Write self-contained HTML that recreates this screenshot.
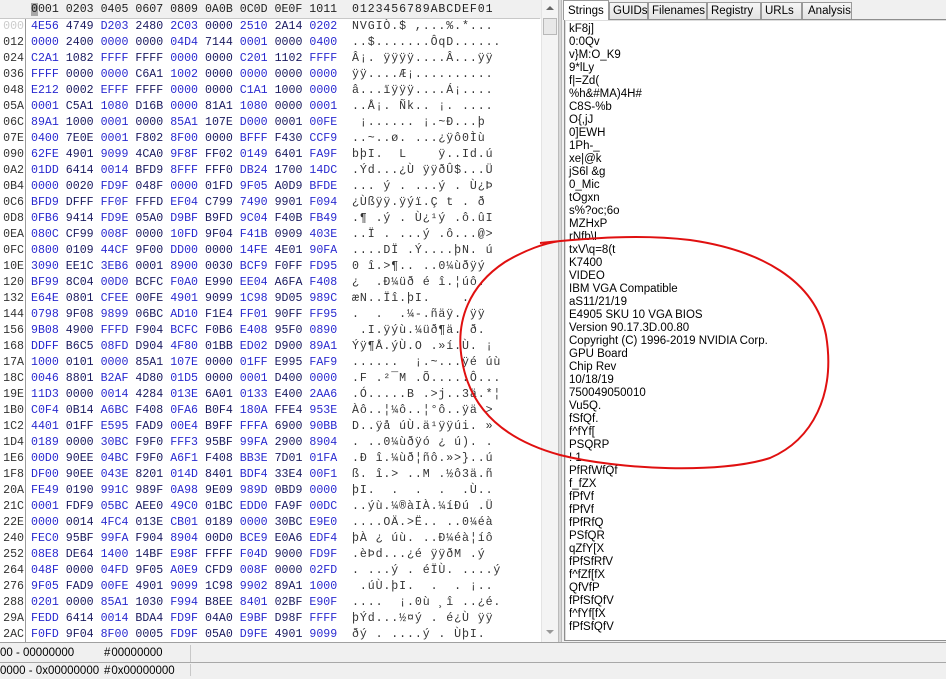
<!DOCTYPE html>
<html><head><meta charset="utf-8"><style>
*{margin:0;padding:0;box-sizing:border-box}
body{width:946px;height:676px;overflow:hidden;background:#f0f0f0;position:relative;font-family:"Liberation Sans",sans-serif}
.hexhead{position:absolute;left:0;top:0;width:540px;height:19px;background:#f0f0f0;border-bottom:1px solid #c8c8c8;font:11.6px/19px "Liberation Mono",monospace;color:#222;white-space:pre}
.hexarea{position:absolute;left:0;top:19px;width:541px;height:623px;background:#fff;overflow:hidden}
.offcol{position:absolute;left:0;top:0;width:26px;height:623px;background:#fff;border-right:1px solid #9a9a9a}
.row{position:absolute;left:0;height:16px;font:11.6px/16px "Liberation Mono",monospace;white-space:pre}
.off{position:absolute;left:0;width:26px;text-align:right;padding-right:2px;color:#333}
.hx{position:absolute;left:31px;color:#1a1a60}
.b{color:#2a2ad0}
.as{position:absolute;left:352px;color:#333;letter-spacing:0.9px}
.sb{position:absolute;left:541px;top:0;width:17px;height:642px;background:#f4f4f4;border-left:1px solid #e4e4e4}
.thumb{position:absolute;left:1px;top:18px;width:14px;height:17px;background:#e8e8e8;border:1px solid #b8b8b8}
.div{position:absolute;left:558px;top:0;width:4px;height:642px;background:#d8d8d8;border-left:1px solid #bbb;border-right:1px solid #bbb}
.tab{position:absolute;top:2px;height:17px;border:1px solid #9a9a9a;border-bottom:none;background:linear-gradient(#f6f6f6,#e2e2e2);font-size:11.5px;line-height:16px;padding:0 3px;color:#000}
.list{position:absolute;left:564px;top:19px;width:382px;height:622px;background:#fff;border:1px solid #8e8e8e;border-right:none;box-shadow:inset 1px 1px 0 #ddd}
.li{position:absolute;left:4px;font-size:11.5px;line-height:13px;color:#000;white-space:pre}
.status{position:absolute;left:0;width:946px;font-size:11.5px;color:#000}
</style></head><body>
<div class="hexhead"><span style="position:absolute;left:31px"><span style="background:#a8a8a8">0</span>001 0203 0405 0607 0809 0A0B 0C0D 0E0F 1011</span><span style="position:absolute;left:352px;letter-spacing:0.9px">0123456789ABCDEF01</span></div>
<div class="hexarea">
<div class="offcol"></div>
<div class="row" style="top:0px"><span class="off" style="color:#ccc">000</span><span class="hx"><span class="b">4E56</span> 4749 <span class="b">D203</span> 2480 <span class="b">2C03</span> 0000 <span class="b">2510</span> 2A14 <span class="b">0202</span></span><span class="as">NVGIÒ.$ ,...%.*...</span></div>
<div class="row" style="top:16px"><span class="off">012</span><span class="hx"><span class="b">0000</span> 2400 <span class="b">0000</span> 0000 <span class="b">04D4</span> 7144 <span class="b">0001</span> 0000 <span class="b">0400</span></span><span class="as">..$.......ÔqD......</span></div>
<div class="row" style="top:32px"><span class="off">024</span><span class="hx"><span class="b">C2A1</span> 1082 <span class="b">FFFF</span> FFFF <span class="b">0000</span> 0000 <span class="b">C201</span> 1102 <span class="b">FFFF</span></span><span class="as">Â¡. ÿÿÿÿ....Â...ÿÿ</span></div>
<div class="row" style="top:48px"><span class="off">036</span><span class="hx"><span class="b">FFFF</span> 0000 <span class="b">0000</span> C6A1 <span class="b">1002</span> 0000 <span class="b">0000</span> 0000 <span class="b">0000</span></span><span class="as">ÿÿ....Æ¡..........</span></div>
<div class="row" style="top:64px"><span class="off">048</span><span class="hx"><span class="b">E212</span> 0002 <span class="b">EFFF</span> FFFF <span class="b">0000</span> 0000 <span class="b">C1A1</span> 1000 <span class="b">0000</span></span><span class="as">â...ïÿÿÿ....Á¡....</span></div>
<div class="row" style="top:80px"><span class="off">05A</span><span class="hx"><span class="b">0001</span> C5A1 <span class="b">1080</span> D16B <span class="b">0000</span> 81A1 <span class="b">1080</span> 0000 <span class="b">0001</span></span><span class="as">..Å¡. Ñk.. ¡. ....</span></div>
<div class="row" style="top:96px"><span class="off">06C</span><span class="hx"><span class="b">89A1</span> 1000 <span class="b">0001</span> 0000 <span class="b">85A1</span> 107E <span class="b">D000</span> 0001 <span class="b">00FE</span></span><span class="as"> ¡...... ¡.~Ð...þ</span></div>
<div class="row" style="top:112px"><span class="off">07E</span><span class="hx"><span class="b">0400</span> 7E0E <span class="b">0001</span> F802 <span class="b">8F00</span> 0000 <span class="b">BFFF</span> F430 <span class="b">CCF9</span></span><span class="as">..~..ø. ...¿ÿô0Ìù</span></div>
<div class="row" style="top:128px"><span class="off">090</span><span class="hx"><span class="b">62FE</span> 4901 <span class="b">9099</span> 4CA0 <span class="b">9F8F</span> FF02 <span class="b">0149</span> 6401 <span class="b">FA9F</span></span><span class="as">bþI.  L    ÿ..Id.ú</span></div>
<div class="row" style="top:144px"><span class="off">0A2</span><span class="hx"><span class="b">01DD</span> 6414 <span class="b">0014</span> BFD9 <span class="b">8FFF</span> FFF0 <span class="b">DB24</span> 1700 <span class="b">14DC</span></span><span class="as">.Ýd...¿Ù ÿÿðÛ$...Ü</span></div>
<div class="row" style="top:160px"><span class="off">0B4</span><span class="hx"><span class="b">0000</span> 0020 <span class="b">FD9F</span> 048F <span class="b">0000</span> 01FD <span class="b">9F05</span> A0D9 <span class="b">BFDE</span></span><span class="as">... ý . ...ý . Ù¿Þ</span></div>
<div class="row" style="top:176px"><span class="off">0C6</span><span class="hx"><span class="b">BFD9</span> DFFF <span class="b">FF0F</span> FFFD <span class="b">EF04</span> C799 <span class="b">7490</span> 9901 <span class="b">F094</span></span><span class="as">¿Ùßÿÿ.ÿýï.Ç t . ð</span></div>
<div class="row" style="top:192px"><span class="off">0D8</span><span class="hx"><span class="b">0FB6</span> 9414 <span class="b">FD9E</span> 05A0 <span class="b">D9BF</span> B9FD <span class="b">9C04</span> F40B <span class="b">FB49</span></span><span class="as">.¶ .ý . Ù¿¹ý .ô.ûI</span></div>
<div class="row" style="top:208px"><span class="off">0EA</span><span class="hx"><span class="b">080C</span> CF99 <span class="b">008F</span> 0000 <span class="b">10FD</span> 9F04 <span class="b">F41B</span> 0909 <span class="b">403E</span></span><span class="as">..Ï . ...ý .ô...@&gt;</span></div>
<div class="row" style="top:224px"><span class="off">0FC</span><span class="hx"><span class="b">0800</span> 0109 <span class="b">44CF</span> 9F00 <span class="b">DD00</span> 0000 <span class="b">14FE</span> 4E01 <span class="b">90FA</span></span><span class="as">....DÏ .Ý....þN. ú</span></div>
<div class="row" style="top:240px"><span class="off">10E</span><span class="hx"><span class="b">3090</span> EE1C <span class="b">3EB6</span> 0001 <span class="b">8900</span> 0030 <span class="b">BCF9</span> F0FF <span class="b">FD95</span></span><span class="as">0 î.&gt;¶.. ..0¼ùðÿý</span></div>
<div class="row" style="top:256px"><span class="off">120</span><span class="hx"><span class="b">BF99</span> 8C04 <span class="b">00D0</span> BCFC <span class="b">F0A0</span> E990 <span class="b">EE04</span> A6FA <span class="b">F408</span></span><span class="as">¿  .Ð¼üð é î.¦úô.</span></div>
<div class="row" style="top:272px"><span class="off">132</span><span class="hx"><span class="b">E64E</span> 0801 <span class="b">CFEE</span> 00FE <span class="b">4901</span> 9099 <span class="b">1C98</span> 9D05 <span class="b">989C</span></span><span class="as">æN..Ïî.þI.    .</span></div>
<div class="row" style="top:288px"><span class="off">144</span><span class="hx"><span class="b">0798</span> 9F08 <span class="b">9899</span> 06BC <span class="b">AD10</span> F1E4 <span class="b">FF01</span> 90FF <span class="b">FF95</span></span><span class="as">.  .  .¼-.ñäÿ. ÿÿ</span></div>
<div class="row" style="top:304px"><span class="off">156</span><span class="hx"><span class="b">9B08</span> 4900 <span class="b">FFFD</span> F904 <span class="b">BCFC</span> F0B6 <span class="b">E408</span> 95F0 <span class="b">0890</span></span><span class="as"> .I.ÿýù.¼üð¶ä. ð.</span></div>
<div class="row" style="top:320px"><span class="off">168</span><span class="hx"><span class="b">DDFF</span> B6C5 <span class="b">08FD</span> D904 <span class="b">4F80</span> 01BB <span class="b">ED02</span> D900 <span class="b">89A1</span></span><span class="as">Ýÿ¶Å.ýÙ.O .»í.Ù. ¡</span></div>
<div class="row" style="top:336px"><span class="off">17A</span><span class="hx"><span class="b">1000</span> 0101 <span class="b">0000</span> 85A1 <span class="b">107E</span> 0000 <span class="b">01FF</span> E995 <span class="b">FAF9</span></span><span class="as">......  ¡.~...ÿé úù</span></div>
<div class="row" style="top:352px"><span class="off">18C</span><span class="hx"><span class="b">0046</span> 8801 <span class="b">B2AF</span> 4D80 <span class="b">01D5</span> 0000 <span class="b">0001</span> D400 <span class="b">0000</span></span><span class="as">.F .²¯M .Õ.....Ô...</span></div>
<div class="row" style="top:368px"><span class="off">19E</span><span class="hx"><span class="b">11D3</span> 0000 <span class="b">0014</span> 4284 <span class="b">013E</span> 6A01 <span class="b">0133</span> E400 <span class="b">2AA6</span></span><span class="as">.Ó.....B .&gt;j..3ä.*¦</span></div>
<div class="row" style="top:384px"><span class="off">1B0</span><span class="hx"><span class="b">C0F4</span> 0B14 <span class="b">A6BC</span> F408 <span class="b">0FA6</span> B0F4 <span class="b">180A</span> FFE4 <span class="b">953E</span></span><span class="as">Àô..¦¼ô..¦°ô..ÿä &gt;</span></div>
<div class="row" style="top:400px"><span class="off">1C2</span><span class="hx"><span class="b">4401</span> 01FF <span class="b">E595</span> FAD9 <span class="b">00E4</span> B9FF <span class="b">FFFA</span> 6900 <span class="b">90BB</span></span><span class="as">D..ÿå úÙ.ä¹ÿÿúi. »</span></div>
<div class="row" style="top:416px"><span class="off">1D4</span><span class="hx"><span class="b">0189</span> 0000 <span class="b">30BC</span> F9F0 <span class="b">FFF3</span> 95BF <span class="b">99FA</span> 2900 <span class="b">8904</span></span><span class="as">. ..0¼ùðÿó ¿ ú). .</span></div>
<div class="row" style="top:432px"><span class="off">1E6</span><span class="hx"><span class="b">00D0</span> 90EE <span class="b">04BC</span> F9F0 <span class="b">A6F1</span> F408 <span class="b">BB3E</span> 7D01 <span class="b">01FA</span></span><span class="as">.Ð î.¼ùð¦ñô.»&gt;}..ú</span></div>
<div class="row" style="top:448px"><span class="off">1F8</span><span class="hx"><span class="b">DF00</span> 90EE <span class="b">043E</span> 8201 <span class="b">014D</span> 8401 <span class="b">BDF4</span> 33E4 <span class="b">00F1</span></span><span class="as">ß. î.&gt; ..M .½ô3ä.ñ</span></div>
<div class="row" style="top:464px"><span class="off">20A</span><span class="hx"><span class="b">FE49</span> 0190 <span class="b">991C</span> 989F <span class="b">0A98</span> 9E09 <span class="b">989D</span> 0BD9 <span class="b">0000</span></span><span class="as">þI.  .  .  .  .Ù..</span></div>
<div class="row" style="top:480px"><span class="off">21C</span><span class="hx"><span class="b">0001</span> FDF9 <span class="b">05BC</span> AEE0 <span class="b">49C0</span> 01BC <span class="b">EDD0</span> FA9F <span class="b">00DC</span></span><span class="as">..ýù.¼®àIÀ.¼íÐú .Ü</span></div>
<div class="row" style="top:496px"><span class="off">22E</span><span class="hx"><span class="b">0000</span> 0014 <span class="b">4FC4</span> 013E <span class="b">CB01</span> 0189 <span class="b">0000</span> 30BC <span class="b">E9E0</span></span><span class="as">....OÄ.&gt;Ë.. ..0¼éà</span></div>
<div class="row" style="top:512px"><span class="off">240</span><span class="hx"><span class="b">FEC0</span> 95BF <span class="b">99FA</span> F904 <span class="b">8904</span> 00D0 <span class="b">BCE9</span> E0A6 <span class="b">EDF4</span></span><span class="as">þÀ ¿ úù. ..Ð¼éà¦íô</span></div>
<div class="row" style="top:528px"><span class="off">252</span><span class="hx"><span class="b">08E8</span> DE64 <span class="b">1400</span> 14BF <span class="b">E98F</span> FFFF <span class="b">F04D</span> 9000 <span class="b">FD9F</span></span><span class="as">.èÞd...¿é ÿÿðM .ý</span></div>
<div class="row" style="top:544px"><span class="off">264</span><span class="hx"><span class="b">048F</span> 0000 <span class="b">04FD</span> 9F05 <span class="b">A0E9</span> CFD9 <span class="b">008F</span> 0000 <span class="b">02FD</span></span><span class="as">. ...ý . éÏÙ. ....ý</span></div>
<div class="row" style="top:560px"><span class="off">276</span><span class="hx"><span class="b">9F05</span> FAD9 <span class="b">00FE</span> 4901 <span class="b">9099</span> 1C98 <span class="b">9902</span> 89A1 <span class="b">1000</span></span><span class="as"> .úÙ.þI.  .  . ¡..</span></div>
<div class="row" style="top:576px"><span class="off">288</span><span class="hx"><span class="b">0201</span> 0000 <span class="b">85A1</span> 1030 <span class="b">F994</span> B8EE <span class="b">8401</span> 02BF <span class="b">E90F</span></span><span class="as">....  ¡.0ù ¸î ..¿é.</span></div>
<div class="row" style="top:592px"><span class="off">29A</span><span class="hx"><span class="b">FEDD</span> 6414 <span class="b">0014</span> BDA4 <span class="b">FD9F</span> 04A0 <span class="b">E9BF</span> D98F <span class="b">FFFF</span></span><span class="as">þÝd...½¤ý . é¿Ù ÿÿ</span></div>
<div class="row" style="top:608px"><span class="off">2AC</span><span class="hx"><span class="b">F0FD</span> 9F04 <span class="b">8F00</span> 0005 <span class="b">FD9F</span> 05A0 <span class="b">D9FE</span> 4901 <span class="b">9099</span></span><span class="as">ðý . ....ý . ÙþI.</span></div>
</div>
<div class="sb"><div style="position:absolute;left:4px;top:6px;width:0;height:0;border-left:4px solid transparent;border-right:4px solid transparent;border-bottom:4px solid #666"></div><div class="thumb"></div><div style="position:absolute;left:4px;top:630px;width:0;height:0;border-left:4px solid transparent;border-right:4px solid transparent;border-top:4px solid #999"></div></div>
<div class="div"></div>
<div class="tab" style="left:563px;top:0;height:20px;background:#fff;z-index:2;padding:0 4px;line-height:20px">Strings</div>
<div class="tab" style="left:609px;width:39px">GUIDs</div>
<div class="tab" style="left:648px;width:59px">Filenames</div>
<div class="tab" style="left:707px;width:54px">Registry</div>
<div class="tab" style="left:761px;width:41px">URLs</div>
<div class="tab" style="left:802px;width:50px;padding-left:5px">Analysis</div>
<div style="position:absolute;left:852px;top:19px;width:94px;height:1px;background:#9a9a9a"></div>
<div class="list">
<div class="li" style="top:3px">kF8j]
0:0Qv
v}M:O_K9
9*lLy
f|=Zd(
%h&amp;#MA)4H#
C8S-%b
O{,jJ
0]EWH
1Ph-_
xe|@k
jS6l &amp;g
0_Mic
tOgxn
s%?oc;6o
MZHxP
rNfb\I
txV\q=8(t
K7400
VIDEO
IBM VGA Compatible
aS11/21/19
E4905 SKU 10 VGA BIOS
Version 90.17.3D.00.80
Copyright (C) 1996-2019 NVIDIA Corp.
GPU Board
Chip Rev
10/18/19
750049050010
Vu5Q.
fSfQf.
f^fYf[
PSQRP
! 1
PfRfWfQf
f_fZX
fPfVf
fPfVf
fPfRfQ
PSfQR
qZfY[X
fPfSfRfV
f^fZf[fX
QfVfP
fPfSfQfV
f^fYf[fX
fPfSfQfV</div>
</div>
<svg style="position:absolute;left:0;top:0" width="946" height="676"><path d="M540,243 C590,238 640,234 690,240 C760,250 815,280 826,335 C836,395 812,440 770,458 C720,474 620,470 560,455 C505,440 470,410 462,360 C455,320 470,285 505,262 C525,250 545,243 560,241" fill="none" stroke="#e01010" stroke-width="2"/></svg>
<div style="position:absolute;left:0;top:642px;width:946px;height:1px;background:#a0a0a0"></div>
<div class="status" style="top:645px;height:17px;line-height:17px"><span style="position:absolute;left:0">00 - 00000000</span><span style="position:absolute;left:104px">#&#8202;00000000</span><span style="position:absolute;left:190px;top:0;width:1px;height:17px;background:#c8c8c8"></span></div>
<div style="position:absolute;left:0;top:662px;width:946px;height:1px;background:#a8a8a8"></div>
<div class="status" style="top:664px;height:12px;line-height:15px"><span style="position:absolute;left:0">0000 - 0x00000000</span><span style="position:absolute;left:104px">#&#8202;0x00000000</span><span style="position:absolute;left:190px;top:0;width:1px;height:12px;background:#c8c8c8"></span></div>
</body></html>
